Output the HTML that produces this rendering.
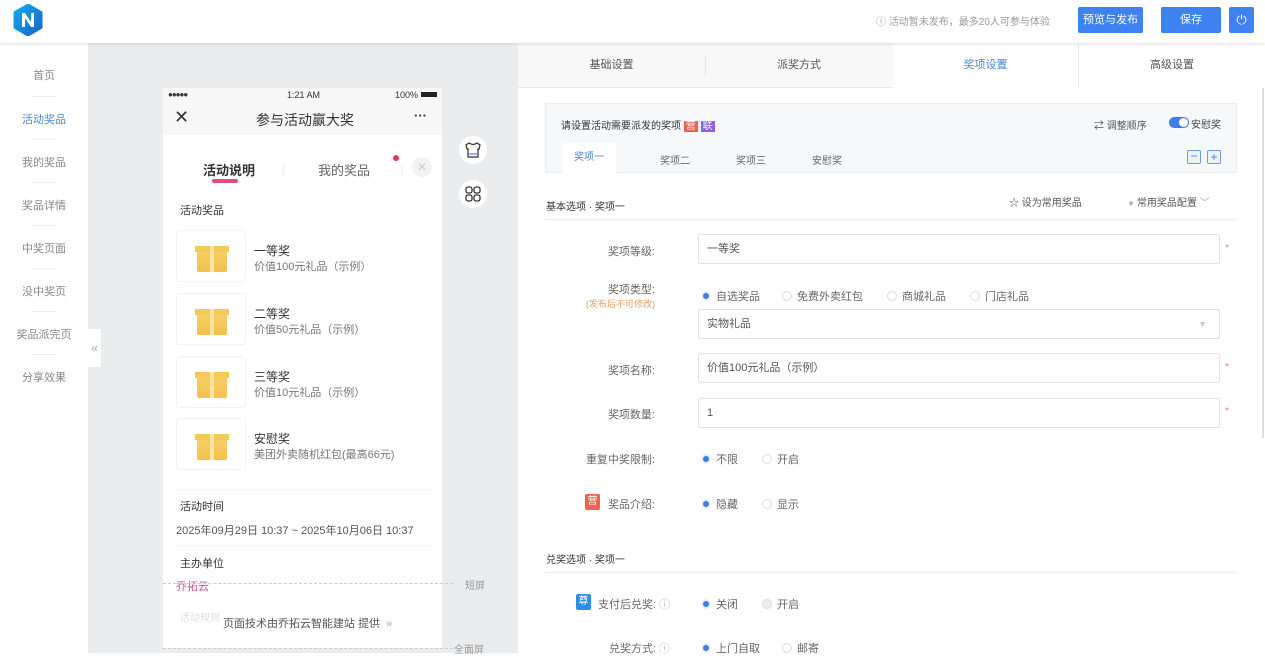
<!DOCTYPE html>
<html><head><meta charset="utf-8">
<style>
*{box-sizing:border-box;margin:0;padding:0}
body{width:1265px;height:653px;overflow:hidden;position:relative;background:#fff;font-family:"Liberation Sans","Noto Sans CJK SC",sans-serif;font-size:12px;color:#333}
.a{position:absolute}
.side div{position:absolute;left:0;width:88px;text-align:center;font-size:11px;color:#888}
.side i{position:absolute;left:32px;width:24px;height:1px;background:#eee}
.btn{position:absolute;top:7px;height:26px;background:#3d82f0;color:#fff;border-radius:2px;font-size:11px;line-height:26px;text-align:center}
.tab{position:absolute;top:43px;height:45px;line-height:45px;text-align:center;font-size:11px;color:#555}
.lbl{position:absolute;width:135px;left:520px;text-align:right;font-size:11px;color:#666;padding-right:0}
.inp{position:absolute;left:698px;width:522px;height:30px;border:1px solid #e3e3e3;border-radius:2px;font-size:11px;line-height:28px;padding-left:8px;color:#555}
.star{position:absolute;left:1225px;color:#f08080;font-size:10px}
.r{position:absolute;font-size:11px;color:#666}
.r b{display:inline-block;width:10px;height:10px;border-radius:50%;border:1px solid #ddd;vertical-align:-1px;margin-right:5px}
.r b.on{background:#3d7ee6;border:2px solid #e6efff}
.gift{position:absolute;left:176px;width:70px;height:52px;border:1px solid #f3f3f3;border-radius:3px}
.gift span{position:absolute;left:20px;top:15px;width:30px;height:26px;background:linear-gradient(#f8d36a,#f2c050);border-radius:2px}
.gift span:before{content:"";position:absolute;left:-2px;top:0;width:34px;height:6px;background:#f5c85a}
.gift span:after{content:"";position:absolute;left:13px;top:0;width:4px;height:26px;background:#f9e5a0}
.gt{position:absolute;left:254px;font-size:12px;color:#333}
.gs{position:absolute;left:254px;font-size:11px;color:#777}
</style></head><body>
<div class="a" style="left:0;top:0;width:1265px;height:43px;background:#fff;box-shadow:0 1px 3px rgba(0,0,0,.12);z-index:2">
<svg class="a" style="left:13px;top:4px" width="30" height="32" viewBox="0 0 30 32"><defs><linearGradient id="g" x1="0" y1="0" x2="1" y2="1"><stop offset="0" stop-color="#1aa8f0"/><stop offset="1" stop-color="#1466c8"/></linearGradient></defs><polygon points="15,1 28,8.5 28,23.5 15,31 2,23.5 2,8.5" fill="url(#g)" stroke="url(#g)" stroke-width="3" stroke-linejoin="round"/><path d="M9 23V9h3l6 9V9h3v14h-3l-6-9v9z" fill="#fff"/></svg>
<div class="a" style="left:876px;top:13px;font-size:10px;color:#999">ⓘ 活动暂未发布，最多20人可参与体验</div>
<div class="btn" style="left:1078px;width:65px">预览与发布</div>
<div class="btn" style="left:1161px;width:60px">保存</div>
<div class="btn" style="left:1229px;width:25px;font-size:13px">⏻</div>
</div>
<div class="side">
<div style="top:67px">首页</div><i style="top:96px"></i>
<div style="top:111px;color:#4a86d8">活动奖品</div><i style="top:139px"></i>
<div style="top:154px">我的奖品</div><i style="top:182px"></i>
<div style="top:197px">奖品详情</div><i style="top:225px"></i>
<div style="top:240px">中奖页面</div><i style="top:268px"></i>
<div style="top:283px">没中奖页</div><i style="top:311px"></i>
<div style="top:326px">奖品派完页</div><i style="top:354px"></i>
<div style="top:369px">分享效果</div>
</div>
<div class="a" style="left:88px;top:43px;width:430px;height:610px;background:#ebeced"></div>
<div class="a" style="left:88px;top:329px;width:13px;height:38px;background:#fff;color:#aaa;font-size:12px;line-height:38px;text-align:center">«</div>
<div class="a" style="left:163px;top:88px;width:279px;height:560px;background:#fff"></div>
<div class="a" style="left:163px;top:88px;width:279px;height:47px;background:#f7f7f7"></div>
<div class="a" style="left:168px;top:90px;font-size:8px;font-weight:bold;letter-spacing:-1px">●●●●●</div>
<div class="a" style="left:287px;top:90px;font-size:9px">1:21 AM</div>
<div class="a" style="left:395px;top:90px;font-size:9px">100% <span style="display:inline-block;width:16px;height:5px;background:#222;vertical-align:1px"></span></div>
<div class="a" style="left:174px;top:107px;font-size:18px;line-height:20px">✕</div>
<div class="a" style="left:256px;top:110px;font-size:14px">参与活动赢大奖</div>
<div class="a" style="left:414px;top:108px;font-size:13px;font-weight:bold">···</div>
<div class="a" style="left:203px;top:160px;font-size:13px;font-weight:bold">活动说明</div>
<div class="a" style="left:212px;top:179px;width:26px;height:4px;border-radius:2px;background:#e64a78"></div>
<div class="a" style="left:283px;top:164px;width:1px;height:12px;background:#eee"></div>
<div class="a" style="left:318px;top:160px;font-size:13px;color:#666">我的奖品</div>
<div class="a" style="left:393px;top:155px;width:6px;height:6px;border-radius:50%;background:#e6355f"></div>
<div class="a" style="left:401px;top:164px;width:1px;height:12px;background:#eee"></div>
<div class="a" style="left:412px;top:157px;width:20px;height:20px;border-radius:50%;background:#f3f3f3;color:#ccc;text-align:center;line-height:20px">✕</div>
<div class="a" style="left:180px;top:202px;font-size:11px">活动奖品</div>
<div class="gift" style="top:230px"><span></span></div><div class="gt" style="top:242px">一等奖</div><div class="gs" style="top:258px">价值100元礼品（示例）</div>
<div class="gift" style="top:293px"><span></span></div><div class="gt" style="top:305px">二等奖</div><div class="gs" style="top:321px">价值50元礼品（示例）</div>
<div class="gift" style="top:356px"><span></span></div><div class="gt" style="top:368px">三等奖</div><div class="gs" style="top:384px">价值10元礼品（示例）</div>
<div class="gift" style="top:418px"><span></span></div><div class="gt" style="top:430px">安慰奖</div><div class="gs" style="top:446px">美团外卖随机红包(最高66元)</div>
<div class="a" style="left:176px;top:489px;width:256px;height:1px;background:#f2f2f2"></div>
<div class="a" style="left:180px;top:498px;font-size:11px">活动时间</div>
<div class="a" style="left:176px;top:522px;font-size:11px;color:#555">2025年09月29日 10:37 ~ 2025年10月06日 10:37</div>
<div class="a" style="left:176px;top:545px;width:256px;height:1px;background:#f2f2f2"></div>
<div class="a" style="left:180px;top:555px;font-size:11px">主办单位</div>
<div class="a" style="left:176px;top:578px;font-size:11px;color:#c45a8a">乔拓云</div>
<div class="a" style="left:163px;top:583px;width:290px;border-top:1px dashed #ccc"></div>
<div class="a" style="left:465px;top:577px;font-size:10px;color:#999">短屏</div>
<div class="a" style="left:180px;top:609px;font-size:10px;color:#ddd">活动规则</div>
<div class="a" style="left:223px;top:615px;font-size:11px;color:#555">页面技术由乔拓云智能建站 提供 &nbsp;<span style="color:#aaa">»</span></div>
<div class="a" style="left:163px;top:648px;width:290px;border-top:1px dashed #ccc"></div>
<div class="a" style="left:454px;top:641px;font-size:10px;color:#999">全面屏</div>
<div class="a" style="left:459px;top:136px;width:28px;height:28px;border-radius:50%;background:#fff"><svg width="28" height="28" viewBox="0 0 28 28" fill="none" stroke="#333" stroke-width="1.3"><path d="M10 7 L7 9 L8 13 L9 13 L9 21 L19 21 L19 13 L20 13 L21 9 L18 7 Q14 10 10 7Z"/><path d="M9 18 H19" stroke="#5a8be0"/></svg></div>
<div class="a" style="left:459px;top:180px;width:28px;height:28px;border-radius:50%;background:#fff"><svg width="28" height="28" viewBox="0 0 28 28" fill="none" stroke="#333" stroke-width="1.3"><rect x="7" y="7" width="6" height="6" rx="2"/><rect x="15" y="7" width="6" height="6" rx="2"/><rect x="7" y="15" width="6" height="6" rx="2"/><rect x="15" y="15" width="6" height="6" rx="2"/></svg></div>
<div class="a" style="left:518px;top:43px;width:747px;height:45px;background:#f8f8f8;border-bottom:1px solid #e8e8e8"></div>
<div class="tab" style="left:518px;width:187px">基础设置</div>
<div class="a" style="left:705px;top:55px;width:1px;height:22px;background:#e5e5e5"></div>
<div class="tab" style="left:705px;width:188px">派奖方式</div>
<div class="tab" style="left:893px;width:185px;background:#fff;color:#4a86d8;height:46px">奖项设置</div>
<div class="tab" style="left:1078px;width:187px;background:#fff;border-left:1px solid #e8e8e8">高级设置</div>
<div class="a" style="left:1262px;top:88px;width:2px;height:350px;background:#ddd"></div>
<div class="a" style="left:545px;top:103px;width:692px;height:70px;background:#f7f8fa;border:1px solid #eceef0"></div>
<div class="a" style="left:561px;top:117px;font-size:10px">请设置活动需要派发的奖项 <span style="background:#ee6152;color:#fff;padding:0 2px;font-size:10px">营</span> <span style="background:#8e5fe0;color:#fff;padding:0 2px;font-size:10px">联</span></div>
<div class="a" style="left:1094px;top:117px;font-size:10px;color:#555">⇄ 调整顺序</div>
<div class="a" style="left:1169px;top:117px;width:20px;height:11px;border-radius:6px;background:#3d7ee6"><i style="position:absolute;right:1px;top:1px;width:9px;height:9px;border-radius:50%;background:#fff"></i></div>
<div class="a" style="left:1191px;top:116px;font-size:10px;color:#444">安慰奖</div>
<div class="a" style="left:562px;top:143px;width:54px;height:30px;background:#fff;text-align:center;line-height:30px;font-size:10px;color:#4a86d8">奖项一</div>
<div class="a" style="left:660px;top:152px;font-size:10px;color:#666">奖项二</div>
<div class="a" style="left:736px;top:152px;font-size:10px;color:#666">奖项三</div>
<div class="a" style="left:812px;top:152px;font-size:10px;color:#666">安慰奖</div>
<div class="a" style="left:1187px;top:150px;width:14px;height:14px;border:1px solid #6d9be0;border-radius:2px;background:#eef3fb;color:#4a86d8;text-align:center;line-height:11px">−</div>
<div class="a" style="left:1207px;top:150px;width:14px;height:14px;border:1px solid #6d9be0;border-radius:2px;background:#eef3fb;color:#4a86d8;text-align:center;line-height:12px">+</div>
<div class="a" style="left:546px;top:198px;font-size:10px">基本选项 · 奖项一</div>
<div class="a" style="left:1009px;top:194px;font-size:10px;color:#555">☆ 设为常用奖品</div>
<div class="a" style="left:1128px;top:194px;font-size:10px;color:#555"><span style="color:#bbb">●</span> 常用奖品配置 <span style="color:#aaa">﹀</span></div>
<div class="a" style="left:545px;top:219px;width:692px;height:1px;background:#eaeaea"></div>
<div class="lbl" style="top:243px">奖项等级:</div>
<div class="inp" style="top:234px">一等奖</div><div class="star" style="top:243px">*</div>
<div class="lbl" style="top:281px">奖项类型:</div>
<div class="lbl" style="top:297px;font-size:9px;color:#e0a060">(发布后不可修改)</div>
<div class="r" style="left:701px;top:288px"><b class="on"></b>自选奖品</div>
<div class="r" style="left:782px;top:288px"><b></b>免费外卖红包</div>
<div class="r" style="left:887px;top:288px"><b></b>商城礼品</div>
<div class="r" style="left:970px;top:288px"><b></b>门店礼品</div>
<div class="inp" style="top:309px">实物礼品<span style="position:absolute;right:12px;top:0;color:#ccc;font-size:9px">▼</span></div>
<div class="lbl" style="top:362px">奖项名称:</div>
<div class="inp" style="top:353px">价值100元礼品（示例）</div><div class="star" style="top:362px">*</div>
<div class="lbl" style="top:406px">奖项数量:</div>
<div class="inp" style="top:398px">1</div><div class="star" style="top:406px">*</div>
<div class="lbl" style="top:451px">重复中奖限制:</div>
<div class="r" style="left:701px;top:451px"><b class="on"></b>不限</div>
<div class="r" style="left:762px;top:451px"><b></b>开启</div>
<div class="a" style="left:585px;top:494px;width:15px;height:16px;background:#ee6152;color:#fff;font-size:10px;text-align:center;line-height:16px;border-radius:2px">营</div>
<div class="lbl" style="top:496px">奖品介绍:</div>
<div class="r" style="left:701px;top:496px"><b class="on"></b>隐藏</div>
<div class="r" style="left:762px;top:496px"><b></b>显示</div>
<div class="a" style="left:546px;top:551px;font-size:10px">兑奖选项 · 奖项一</div>
<div class="a" style="left:545px;top:572px;width:692px;height:1px;background:#eaeaea"></div>
<div class="a" style="left:576px;top:594px;width:15px;height:16px;background:#2f8ee6;color:#fff;font-size:10px;text-align:center;line-height:16px;border-radius:2px">尊</div>
<div class="a" style="left:598px;top:596px;font-size:11px;color:#666">支付后兑奖: <span style="color:#bbb">ⓘ</span></div>
<div class="r" style="left:701px;top:596px"><b class="on"></b>关闭</div>
<div class="r" style="left:762px;top:596px"><b style="background:#eee"></b>开启</div>
<div class="a" style="left:609px;top:640px;font-size:11px;color:#666">兑奖方式: <span style="color:#bbb">ⓘ</span></div>
<div class="r" style="left:701px;top:640px"><b class="on"></b>上门自取</div>
<div class="r" style="left:782px;top:640px"><b></b>邮寄</div>
</body></html>
